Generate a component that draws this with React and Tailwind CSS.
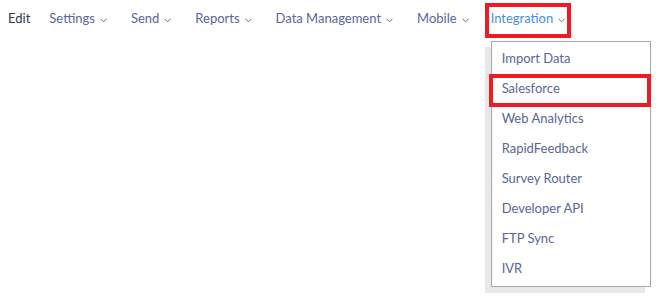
import React from "react";

const navItems = ["Settings", "Send", "Reports", "Data Management", "Mobile"];

const menuItems = [
  "Import Data",
  "Salesforce",
  "Web Analytics",
  "RapidFeedback",
  "Survey Router",
  "Developer API",
  "FTP Sync",
  "IVR",
];

function Chevron({ className = "" }) {
  return (
    <svg width="7" height="5" viewBox="0 0 7 5" className={className} fill="none">
      <path d="M0.5 0.8 L3.5 3.8 L6.5 0.8" stroke="currentColor" strokeWidth="1" />
    </svg>
  );
}

export default function App() {
  return (
    <div className="w-[660px] h-[301px] bg-white font-['Lato',sans-serif] text-[13px]">
      <nav className="flex items-center h-[38px] pl-2">
        <span className="text-[#2f3a4a] mr-[19px]">Edit</span>
        {navItems.map((item) => (
          <span
            key={item}
            className={`flex items-center gap-[5px] text-[#5a669c] ${item === "Mobile" ? "mr-[22px]" : "mr-6"}`}
          >
            {item}
            <Chevron className="mt-[2px]" />
          </span>
        ))}
        {/* Integration, opened */}
        <div className="relative self-stretch flex items-center">
          <span className="flex items-center gap-[5px] text-[#4a90e2]">
            Integration
            <Chevron className="mt-[2px] text-[#6b7394]" />
          </span>
          <div className="absolute top-[3px] bottom-0 -left-[6px] -right-[6px] border-4 border-[#ed1c24]" />
          <div className="absolute left-0 top-[41px] w-[160px] border border-[#a8a8a8] bg-white py-[2px] shadow-[-6px_6px_0_0_#e8e8e8]">
            {menuItems.map((m) => (
              <div key={m} className="relative h-[30px] flex items-center px-[10px] text-[#5a669c]">
                {m}
                {m === "Salesforce" && (
                  <div className="absolute -left-[3px] -right-[1px] top-0 -bottom-[3px] border-4 border-[#ed1c24]" />
                )}
              </div>
            ))}
          </div>
        </div>
      </nav>
    </div>
  );
}
